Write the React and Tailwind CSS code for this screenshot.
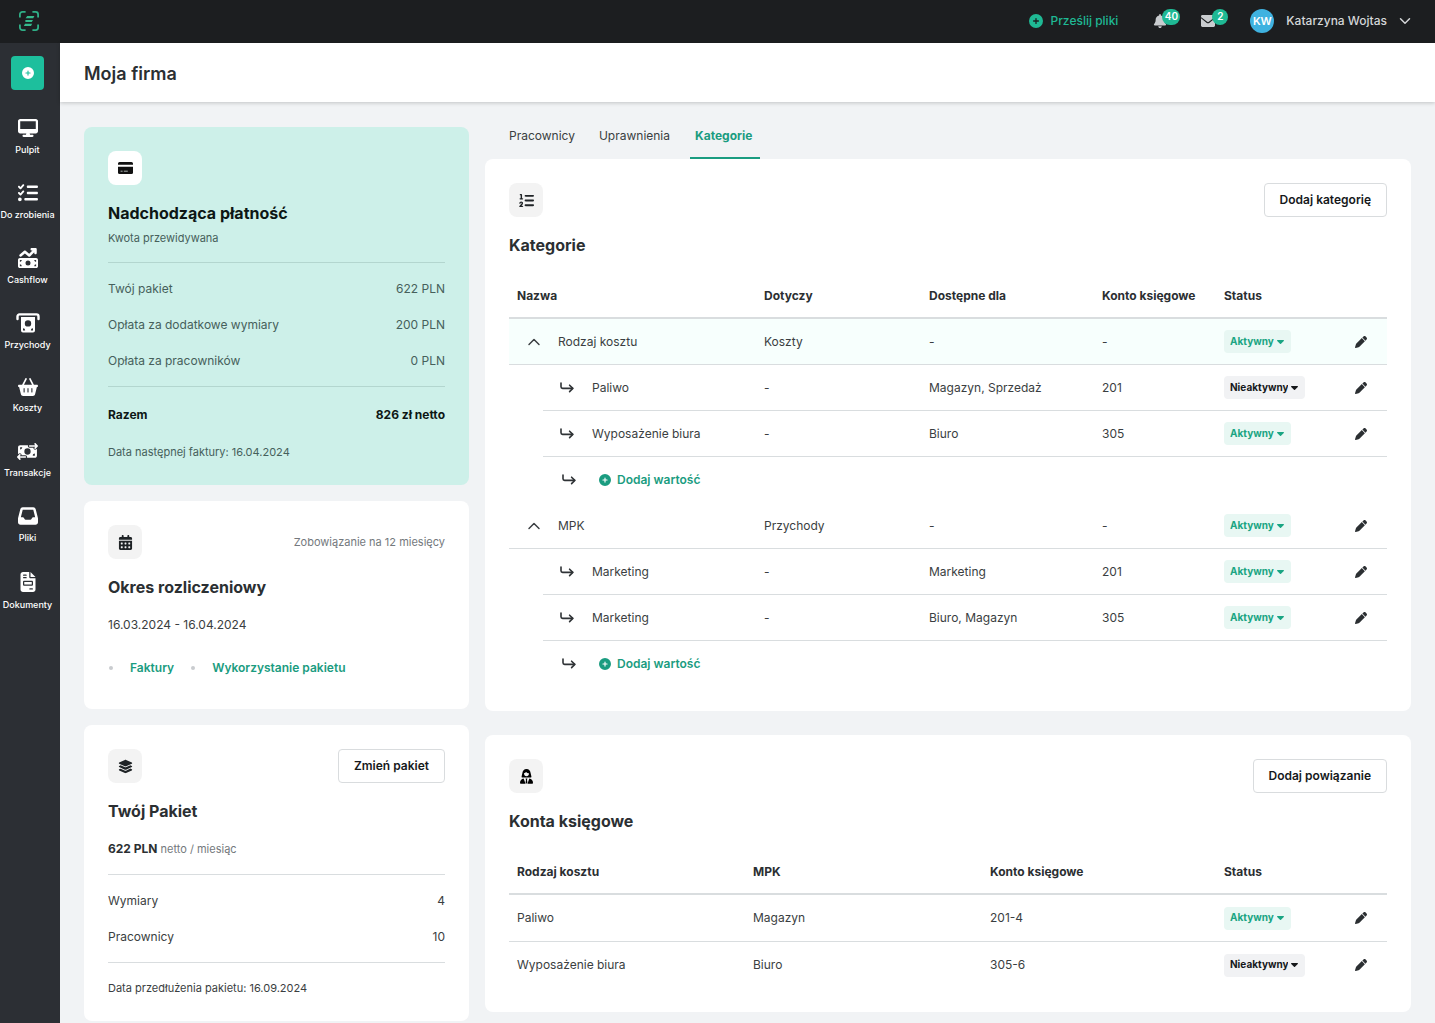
import { useState } from 'react';
import { LuChevronDown, LuChevronUp } from 'react-icons/lu';
import {
  FaBasketShopping,
  FaBell,
  FaCalendarDays,
  FaCirclePlus,
  FaDesktop,
  FaFileInvoice,
  FaInbox,
  FaLayerGroup,
  FaListCheck,
  FaListOl,
  FaMoneyBillTransfer,
  FaMoneyBillTrendUp,
  FaPen,
} from 'react-icons/fa6';

const categories = [
  {
    id: 'rodzaj-kosztu',
    name: 'Rodzaj kosztu',
    type: 'Koszty',
    highlighted: true,
    values: [
      { name: 'Paliwo', available: 'Magazyn, Sprzedaż', account: '201', status: 'Nieaktywny' },
      { name: 'Wyposażenie biura', available: 'Biuro', account: '305', status: 'Aktywny' },
    ],
  },
  {
    id: 'mpk',
    name: 'MPK',
    type: 'Przychody',
    highlighted: false,
    values: [
      { name: 'Marketing', available: 'Marketing', account: '201', status: 'Aktywny' },
      { name: 'Marketing', available: 'Biuro, Magazyn', account: '305', status: 'Aktywny' },
    ],
  },
];

const accounts = [
  { cost: 'Paliwo', mpk: 'Magazyn', account: '201-4', status: 'Aktywny' },
  { cost: 'Wyposażenie biura', mpk: 'Biuro', account: '305-6', status: 'Nieaktywny' },
];

const navItems = [
  { label: 'Pulpit', icon: <FaDesktop size={20} />, box: 'h-5' },
  { label: 'Do zrobienia', icon: <FaListCheck size={20} />, box: 'h-5' },
  { label: 'Cashflow', icon: <FaMoneyBillTrendUp size={20} />, box: 'h-5' },
  { label: 'Przychody', icon: <CashOutIcon />, box: 'h-5' },
  { label: 'Koszty', icon: <FaBasketShopping size={20} />, box: 'h-[18px]' },
  { label: 'Transakcje', icon: <FaMoneyBillTransfer size={21} />, box: 'h-5' },
  { label: 'Pliki', icon: <FaInbox size={20} />, box: 'h-5' },
  { label: 'Dokumenty', icon: <FaFileInvoice size={20} />, box: 'h-[22px]' },
];

function Logo() {
  return (
    <svg width="20" height="20" viewBox="0 0 20 20" fill="none" aria-hidden="true">
      <g stroke="#2fae86" strokeWidth="1.8">
        <path d="M0.9 6.4V3.4A2.5 2.5 0 0 1 3.4 0.9H6.6" />
        <path d="M13.4 0.9H16.6A2.5 2.5 0 0 1 19.1 3.4V6.4" />
        <path d="M19.1 13.6V16.6A2.5 2.5 0 0 1 16.6 19.1H13.4" />
        <path d="M6.6 19.1H3.4A2.5 2.5 0 0 1 0.9 16.6V13.6" />
      </g>
      <g fill="#35b98c">
        <path d="M8.2 5H15.4L14.2 7.2H6.6Z" />
        <path d="M6.4 8.9H14L12.8 11.1H6.4Z" />
        <path d="M6 12.8H13.2L12 15H4.9Z" />
      </g>
    </svg>
  );
}

function CashOutIcon() {
  return (
    <svg width="24" height="20" viewBox="0 0 24 20" fill="none" aria-hidden="true">
      <path d="M1.5 6V3.4A2 2 0 0 1 3.5 1.4H20.5A2 2 0 0 1 22.5 3.4V6" stroke="currentColor" strokeWidth="2.4" strokeLinecap="round" />
      <path
        fillRule="evenodd"
        fill="currentColor"
        d="M5 4H19V17.5A2 2 0 0 1 17 19.5H7A2 2 0 0 1 5 17.5ZM12 7.2A3.2 3.2 0 1 0 12 13.6A3.2 3.2 0 1 0 12 7.2ZM7 15.3V17.5H9.2A2.2 2.2 0 0 0 7 15.3ZM17 15.3A2.2 2.2 0 0 0 14.8 17.5H17Z"
      />
    </svg>
  );
}

function EnvelopeIcon() {
  return (
    <svg width="14" height="12" viewBox="0 0 14 12" aria-hidden="true">
      <rect width="14" height="12" rx="1.4" fill="#c9cccf" />
      <path d="M0 2.6L5.8 7.3A1.9 1.9 0 0 0 8.2 7.3L14 2.6" fill="none" stroke="#1c1e20" strokeWidth="1.1" />
    </svg>
  );
}

function CardIcon() {
  return (
    <svg width="15" height="12" viewBox="0 0 15 12" aria-hidden="true">
      <path d="M1.5 0H13.5A1.5 1.5 0 0 1 15 1.5V2.7H0V1.5A1.5 1.5 0 0 1 1.5 0Z" fill="#111" />
      <path d="M0 4.7H15V10.5A1.5 1.5 0 0 1 13.5 12H1.5A1.5 1.5 0 0 1 0 10.5Z" fill="#111" />
      <path d="M2.6 9.2H4.6M5.8 9.2H9.8" stroke="#a9b0ae" strokeWidth="1" />
    </svg>
  );
}

function AccountantIcon() {
  return (
    <svg width="13" height="15" viewBox="0 0 13 15" fill="#000" aria-hidden="true">
      <path
        fillRule="evenodd"
        d="M6.5 0C9 0 10.4 1.8 10.6 4L11.4 7.6C11.5 8.2 11.2 8.6 10.6 8.6H2.4C1.8 8.6 1.5 8.2 1.6 7.6L2.4 4C2.6 1.8 4 0 6.5 0ZM4 4.2C4 6 5 7.2 6.5 7.2S9 6 9 4.2C7.8 4.2 6.8 3.7 6.1 2.9C5.6 3.6 4.9 4 4 4.2Z"
      />
      <path d="M3.6 9.6L5.6 14.8H0.8C0.3 14.8 0 14.5 0 14C0 11.7 1.5 9.9 3.6 9.6Z" />
      <path d="M9.4 9.6L7.4 14.8H12.2C12.7 14.8 13 14.5 13 14C13 11.7 11.5 9.9 9.4 9.6Z" />
      <path d="M5.6 9.6H7.4L7 11L7.4 13.6L6.5 14.8L5.6 13.6L6 11Z" />
    </svg>
  );
}

function ChildArrow() {
  return (
    <svg width="14" height="12" viewBox="0 0 14 12" fill="none" stroke="#2f3336" strokeWidth="1.6" strokeLinecap="round" strokeLinejoin="round" aria-hidden="true">
      <path d="M1 1V4.8A1.6 1.6 0 0 0 2.6 6.4H12.6" />
      <path d="M9.6 3.2L12.8 6.4L9.6 9.6" />
    </svg>
  );
}

function IconBox({ white, children }) {
  return (
    <div
      className={`flex h-[34px] w-[34px] items-center justify-center rounded-lg text-[#1f2326] ${
        white ? 'bg-white' : 'bg-[#f3f3f3]'
      }`}
    >
      {children}
    </div>
  );
}

function OutlineButton({ children }) {
  return (
    <button
      type="button"
      className="h-[34px] rounded border border-[#d9dcde] bg-white px-[15px] font-semibold text-[#16191b]"
    >
      {children}
    </button>
  );
}

function Heading({ children, dark }) {
  return (
    <h2 className={`mt-4 text-base leading-6 font-bold ${dark ? 'text-[#0d1715]' : 'text-[#2b2f32]'}`}>
      {children}
    </h2>
  );
}

function StatusSelect({ value, label }) {
  const [status, setStatus] = useState(value);
  const active = status === 'Aktywny';

  return (
    <span
      className={`relative inline-flex h-[23px] items-center rounded align-middle ${
        active ? 'bg-[#e8f7f3] text-[#1aa583]' : 'bg-[#f1f2f4] text-[#16191b]'
      }`}
    >
      <select
        aria-label={label}
        value={status}
        onChange={(e) => setStatus(e.target.value)}
        className="field-sizing-content h-[23px] appearance-none bg-transparent pr-[17px] pl-1.5 text-[10px] font-bold"
      >
        <option>Aktywny</option>
        <option>Nieaktywny</option>
      </select>
      <svg className="pointer-events-none absolute right-[7px]" width="7" height="4" viewBox="0 0 7 4" fill="currentColor" aria-hidden="true">
        <path d="M0.6 0H6.4C6.9 0 7.2 0.5 6.8 0.9L4 3.7C3.7 4 3.3 4 3 3.7L0.2 0.9C-0.2 0.5 0.1 0 0.6 0Z" />
      </svg>
    </span>
  );
}

function EditButton({ name }) {
  return (
    <button type="button" aria-label={`Edytuj ${name}`} className="block p-[3px] text-[#2b2f32]">
      <FaPen size={12} />
    </button>
  );
}

function SummaryRow({ label, value, strong }) {
  return (
    <div className={`flex h-9 items-center justify-between ${strong ? 'font-bold text-[#0d1715]' : ''}`}>
      <dt>{label}</dt>
      <dd>{value}</dd>
    </div>
  );
}

function CategoryRows({ category }) {
  const [open, setOpen] = useState(true);
  const cell = 'h-[46px] border-b border-[#d9dddf] px-2';

  return (
    <tbody>
      <tr className={category.highlighted ? 'bg-[#f7fffd]' : ''}>
        <td colSpan={2} className={cell}>
          <div className="flex items-center gap-[14px] pl-[7px]">
            <button type="button" aria-label={`Rozwiń ${category.name}`} aria-expanded={open} onClick={() => setOpen(!open)}>
              {open ? <LuChevronUp size={20} strokeWidth={1.75} /> : <LuChevronDown size={20} strokeWidth={1.75} />}
            </button>
            {category.name}
          </div>
        </td>
        <td className={cell}>{category.type}</td>
        <td className={cell}>-</td>
        <td className={cell}>-</td>
        <td className={cell}>
          <StatusSelect value="Aktywny" label={`Status ${category.name}`} />
        </td>
        <td className={cell}>
          <EditButton name={category.name} />
        </td>
      </tr>
      {open &&
        category.values.map((item, index) => (
          <tr key={index}>
            <td />
            <td className={cell}>
              <div className="flex items-center gap-[18px] pl-[9px]">
                <ChildArrow />
                {item.name}
              </div>
            </td>
            <td className={cell}>-</td>
            <td className={cell}>{item.available}</td>
            <td className={cell}>{item.account}</td>
            <td className={cell}>
              <StatusSelect value={item.status} label={`Status ${item.name}`} />
            </td>
            <td className={cell}>
              <EditButton name={item.name} />
            </td>
          </tr>
        ))}
      {open && (
        <tr>
          <td />
          <td colSpan={6} className="h-[46px] px-2">
            <div className="flex items-center gap-[23px] pl-[11px]">
              <ChildArrow />
              <button type="button" className="flex items-center gap-1.5 font-semibold text-[#1a9c80]">
                <FaCirclePlus size={12} />
                Dodaj wartość
              </button>
            </div>
          </td>
        </tr>
      )}
    </tbody>
  );
}

function TopBar() {
  return (
    <header className="flex h-[43px] items-center justify-between bg-[#1c1e20] pr-[21px] pb-px pl-[19px]">
      <a href="#" aria-label="Strona główna">
        <Logo />
      </a>
      <div className="flex items-center font-medium">
        <button type="button" className="flex items-center gap-2 text-[#1fb994]">
          <FaCirclePlus size={14} />
          Prześlij pliki
        </button>
        <button type="button" aria-label="Powiadomienia" className="relative ml-[35px] w-[27px] text-[#c9cccf]">
          <FaBell size={14} />
          <span className="absolute -top-[5px] right-0 flex h-4 w-[18px] items-center justify-center rounded-full bg-[#1fb994] text-[10px] font-semibold text-white">
            40
          </span>
        </button>
        <button type="button" aria-label="Wiadomości" className="relative ml-[21px] w-[27px]">
          <EnvelopeIcon />
          <span className="absolute -top-1.5 right-0 flex h-4 w-4 items-center justify-center rounded-full bg-[#1fb994] text-[10px] font-semibold text-white">
            2
          </span>
        </button>
        <button type="button" className="ml-[22px] flex items-center text-[#d4d6d8]">
          <span className="flex h-6 w-6 items-center justify-center rounded-full bg-[#3fb2e0] text-[11px] font-semibold text-white">
            KW
          </span>
          <span className="ml-3">Katarzyna Wojtas</span>
          <LuChevronDown size={18} className="ml-[9px]" />
        </button>
      </div>
    </header>
  );
}

function Sidebar() {
  return (
    <aside className="flex w-[60px] shrink-0 flex-col bg-[#2c2f34] pt-[13px] pr-[5px] text-white">
      <button type="button" aria-label="Dodaj" className="mx-auto flex h-[34px] w-[33px] items-center justify-center rounded bg-[#1dbf9d]">
        <FaCirclePlus size={12} />
      </button>
      <nav className="mt-7 flex flex-col gap-[27px]">
        {navItems.map((item) => (
          <a key={item.label} href="#" className="flex flex-col items-center gap-1.5">
            <span className={`flex items-center ${item.box}`}>{item.icon}</span>
            <span className="text-[9px] leading-3 font-medium whitespace-nowrap">{item.label}</span>
          </a>
        ))}
      </nav>
    </aside>
  );
}

export default function App() {
  const headCell = 'h-[46px] border-b-2 border-[#d9dddf] px-2 pt-0.5 font-bold';

  return (
    <div className="flex min-h-screen flex-col bg-[#f1f3f5] font-['Inter',sans-serif] text-xs text-[#3a3e41]">
      <TopBar />
      <div className="flex flex-1">
        <Sidebar />
        <main className="min-w-0 flex-1">
          <div className="flex h-[59px] items-center bg-white px-6 pt-[2px] shadow-[0_1px_4px_rgba(0,0,0,0.2)]">
            <h1 className="text-lg font-semibold text-[#2b2f32]">Moja firma</h1>
          </div>

          <div className="grid grid-cols-[385px_1fr] items-start gap-4 px-6 pt-[25px]">
            <div className="flex flex-col gap-4">
              <section className="rounded-lg bg-[#cdf0e9] p-6 text-[#46605b]">
                <IconBox white>
                  <CardIcon />
                </IconBox>
                <Heading dark>Nadchodząca płatność</Heading>
                <p className="mt-1 text-[11px] leading-[18px]">Kwota przewidywana</p>
                <dl className="mt-[15px] border-y border-[#b3d6cf] pt-2 pb-[7px]">
                  <SummaryRow label="Twój pakiet" value="622 PLN" />
                  <SummaryRow label="Opłata za dodatkowe wymiary" value="200 PLN" />
                  <SummaryRow label="Opłata za pracowników" value="0 PLN" />
                </dl>
                <dl className="mt-[10px]">
                  <SummaryRow label="Razem" value="826 zł netto" strong />
                </dl>
                <p className="mt-[10px] text-[11px] leading-[18px]">Data następnej faktury: 16.04.2024</p>
              </section>

              <section className="rounded-lg bg-white p-6">
                <div className="flex items-center justify-between">
                  <IconBox>
                    <FaCalendarDays size={15} />
                  </IconBox>
                  <span className="text-[11px] text-[#74797d]">Zobowiązanie na 12 miesięcy</span>
                </div>
                <Heading>Okres rozliczeniowy</Heading>
                <p className="mt-4 leading-5">16.03.2024 - 16.04.2024</p>
                <ul className="mt-6 flex items-center gap-[17px] pb-2 pl-px leading-[18px] font-semibold text-[#1a9c80]">
                  <li className="flex items-center gap-[17px]">
                    <span className="h-1 w-1 rounded-full bg-[#c9cccf]" />
                    <a href="#">Faktury</a>
                  </li>
                  <li className="flex items-center gap-[17px]">
                    <span className="h-1 w-1 rounded-full bg-[#c9cccf]" />
                    <a href="#">Wykorzystanie pakietu</a>
                  </li>
                </ul>
              </section>

              <section className="rounded-lg bg-white p-6">
                <div className="flex items-center justify-between">
                  <IconBox>
                    <FaLayerGroup size={15} />
                  </IconBox>
                  <OutlineButton>Zmień pakiet</OutlineButton>
                </div>
                <Heading>Twój Pakiet</Heading>
                <p className="mt-4 flex h-5 items-baseline gap-[3px] leading-5">
                  <strong className="font-bold text-[#2b2f32]">622 PLN</strong>
                  <span className="text-[11px] text-[#74797d]">netto / miesiąc</span>
                </p>
                <dl className="mt-[15px] border-y border-[#d9dddf] pt-2 pb-[7px]">
                  <SummaryRow label="Wymiary" value="4" />
                  <SummaryRow label="Pracownicy" value="10" />
                </dl>
                <p className="mt-4 text-[11px] leading-[18px]">Data przedłużenia pakietu: 16.09.2024</p>
              </section>
            </div>

            <div className="min-w-0">
              <nav className="flex h-8 gap-6 pl-6 leading-[18px]">
                <a href="#">Pracownicy</a>
                <a href="#">Uprawnienia</a>
                <a href="#" aria-current="page" className="-ml-1 border-b-2 border-[#1a9c80] pr-2 pl-[5px] font-bold text-[#1a9c80]">
                  Kategorie
                </a>
              </nav>

              <section className="rounded-lg bg-white p-6">
                <div className="flex items-center justify-between">
                  <IconBox>
                    <FaListOl size={15} />
                  </IconBox>
                  <OutlineButton>Dodaj kategorię</OutlineButton>
                </div>
                <Heading>Kategorie</Heading>
                <table className="mt-4 w-full table-fixed border-separate border-spacing-0 text-left">
                  <colgroup>
                    <col className="w-[34px]" />
                    <col className="w-[213px]" />
                    <col className="w-[165px]" />
                    <col className="w-[173px]" />
                    <col className="w-[122px]" />
                    <col className="w-[128px]" />
                    <col className="w-[43px]" />
                  </colgroup>
                  <thead className="text-[#2b2f32]">
                    <tr>
                      <th colSpan={2} className={headCell}>Nazwa</th>
                      <th className={headCell}>Dotyczy</th>
                      <th className={headCell}>Dostępne dla</th>
                      <th className={headCell}>Konto księgowe</th>
                      <th className={headCell}>Status</th>
                      <th className={headCell} aria-label="Akcje" />
                    </tr>
                  </thead>
                  {categories.map((category) => (
                    <CategoryRows key={category.id} category={category} />
                  ))}
                </table>
              </section>

              <section className="mt-6 rounded-lg bg-white p-6">
                <div className="flex items-center justify-between">
                  <IconBox>
                    <AccountantIcon />
                  </IconBox>
                  <OutlineButton>Dodaj powiązanie</OutlineButton>
                </div>
                <Heading>Konta księgowe</Heading>
                <table className="mt-4 w-full table-fixed border-separate border-spacing-0 text-left">
                  <colgroup>
                    <col className="w-[236px]" />
                    <col className="w-[237px]" />
                    <col className="w-[234px]" />
                    <col className="w-[128px]" />
                    <col className="w-[43px]" />
                  </colgroup>
                  <thead className="text-[#2b2f32]">
                    <tr>
                      <th className={headCell}>Rodzaj kosztu</th>
                      <th className={headCell}>MPK</th>
                      <th className={headCell}>Konto księgowe</th>
                      <th className={headCell}>Status</th>
                      <th className={headCell} aria-label="Akcje" />
                    </tr>
                  </thead>
                  <tbody className="[&>tr:first-child>td]:h-[47px] [&>tr:first-child>td]:border-b">
                    {accounts.map((row) => (
                      <tr key={row.account}>
                        <td className="h-[46px] border-[#d9dddf] px-2">{row.cost}</td>
                        <td className="h-[46px] border-[#d9dddf] px-2">{row.mpk}</td>
                        <td className="h-[46px] border-[#d9dddf] px-2">{row.account}</td>
                        <td className="h-[46px] border-[#d9dddf] px-2">
                          <StatusSelect value={row.status} label={`Status ${row.cost}`} />
                        </td>
                        <td className="h-[46px] border-[#d9dddf] px-2">
                          <EditButton name={row.cost} />
                        </td>
                      </tr>
                    ))}
                  </tbody>
                </table>
              </section>
            </div>
          </div>
        </main>
      </div>
    </div>
  );
}
